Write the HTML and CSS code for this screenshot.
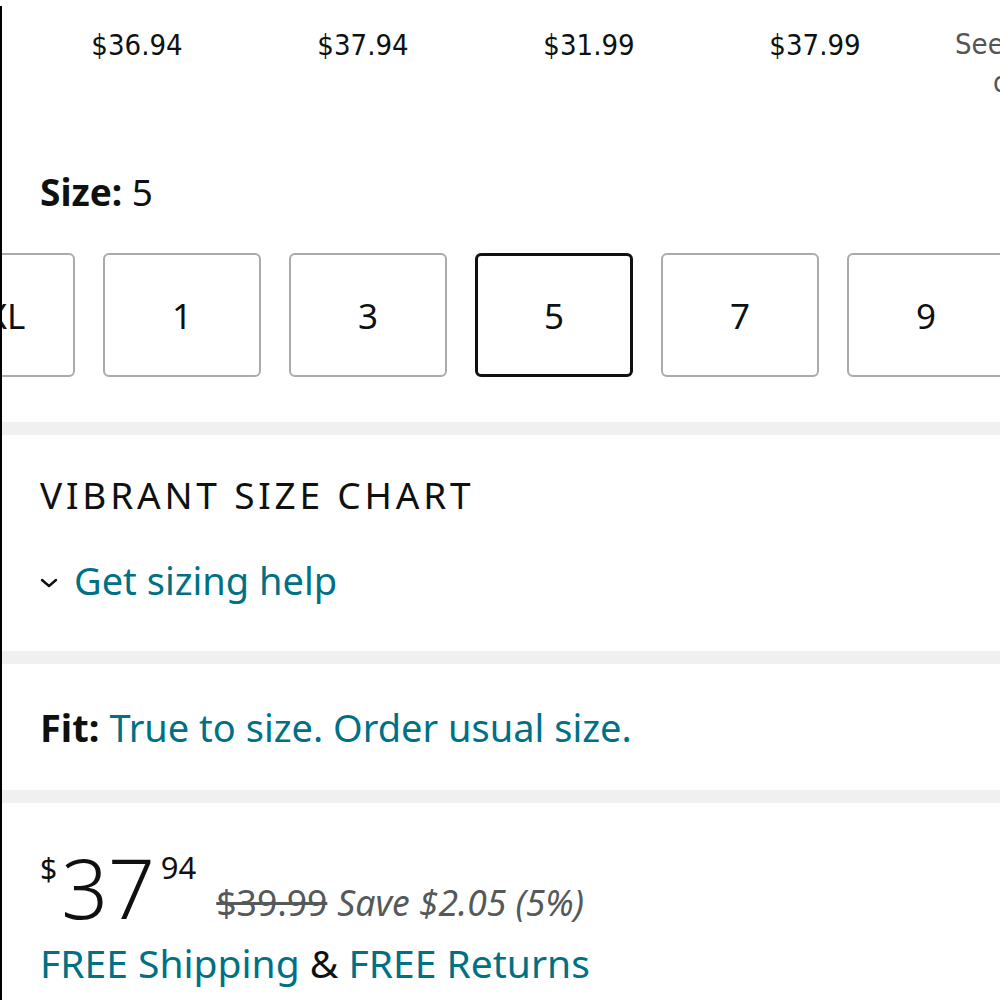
FILE: index.html
```html
<!DOCTYPE html>
<html lang="en">
<head>
    <meta charset="UTF-8">
    <meta name="viewport" content="width=device-width, initial-scale=1.0">
    <title>Product Size</title>
    <link rel="stylesheet" href="styles.css">
</head>
<body>
    <div id="page">
        <div class="swatch-prices">
            <div class="swatch-price">$36.94</div>
            <div class="swatch-price">$37.94</div>
            <div class="swatch-price">$31.99</div>
            <div class="swatch-price">$37.99</div>
            <div class="swatch-price more">See<br><span class="more-2">o</span></div>
        </div>

        <div class="size-section">
            <div class="size-label"><b>Size:</b> 5</div>
            <div class="size-row">
                <div class="size-btn first">XL</div>
                <div class="size-btn">1</div>
                <div class="size-btn">3</div>
                <div class="size-btn selected">5</div>
                <div class="size-btn">7</div>
                <div class="size-btn">9</div>
            </div>
        </div>

        <div class="divider"></div>

        <div class="chart-section">
            <div class="chart-title">VIBRANT SIZE CHART</div>
            <div class="sizing-help">
                <svg class="chevron" width="18" height="10" viewBox="0 0 18 10"><path d="M2 2 L9 8 L16 2" fill="none" stroke="#111" stroke-width="2.4" stroke-linecap="round" stroke-linejoin="round"/></svg>
                <a href="#">Get sizing help</a>
            </div>
        </div>

        <div class="divider"></div>

        <div class="fit-section">
            <b>Fit:</b> <a href="#">True to size. Order usual size.</a>
        </div>

        <div class="divider"></div>

        <div class="price-section">
            <div class="price-line">
                <span class="price-sym">$</span><span class="price-whole">37</span><span class="price-frac">94</span>
                <span class="list-price">$39.99</span>
                <span class="savings">Save $2.05 (5%)</span>
            </div>
            <div class="shipping">
                <a href="#">FREE Shipping</a> &amp; <a href="#">FREE Returns</a>
            </div>
        </div>
    </div>
</body>
</html>
```

FILE: styles.css
```css
body {
    margin: 0;
    padding: 0;
    background: white;
    color: #0f1111;
    font-family: "Noto Sans", "Open Sans", sans-serif;
    overflow: hidden;
}

a {
    color: #007185;
    text-decoration: none;
}

#page {
    margin-top: 6px;
    border-left: 2px solid #000;
    height: 994px;
    overflow: hidden;
}

.swatch-prices {
    display: flex;
    padding-top: 19px;
    height: 126px;
    box-sizing: border-box;
}

.swatch-price {
    flex: 0 0 226px;
    text-align: center;
    font-family: "DejaVu Sans", sans-serif;
    font-stretch: condensed;
    font-size: 29px;
    line-height: 40px;
}

.swatch-price:first-child {
    margin-left: 22px;
}

.swatch-price.more {
    color: #555;
    text-align: left;
    padding-left: 27px;
    line-height: 38px;
}

.more-2 {
    margin-left: 38px;
}

.size-section {
    padding: 37px 0 0 38px;
    height: 290px;
    box-sizing: border-box;
}

.size-label {
    font-size: 37px;
    line-height: 46px;
}

.size-row {
    display: flex;
    gap: 28px;
    margin-left: -123px;
    margin-top: 38px;
}

.size-btn {
    flex: 0 0 158px;
    height: 124px;
    box-sizing: border-box;
    border: 2px solid #aaa;
    border-radius: 6px;
    display: flex;
    align-items: center;
    justify-content: center;
    font-size: 35px;
}

.size-btn.first {
    padding-left: 20px;
}

.size-btn.selected {
    border: 3px solid #0f1111;
}

.divider {
    height: 13px;
    background: #f0f0f0;
}

.chart-section {
    padding: 36px 0 0 38px;
    height: 216px;
    box-sizing: border-box;
}

.chart-title {
    font-size: 37px;
    letter-spacing: 3.8px;
    line-height: 48px;
}

.sizing-help {
    display: flex;
    align-items: center;
    gap: 16px;
    margin-top: 35px;
    font-size: 38px;
    line-height: 52px;
}

.chevron {
    margin-top: 6px;
}

.fit-section {
    padding: 0 0 0 38px;
    height: 126px;
    display: flex;
    align-items: center;
    gap: 10px;
    font-size: 38px;
}

.price-section {
    padding: 42px 0 0 38px;
}

.price-line {
    display: flex;
    align-items: flex-start;
}

.price-sym {
    font-size: 30px;
    line-height: 40px;
    margin-top: 4px;
}

.price-whole {
    font-size: 82px;
    line-height: 84px;
    font-weight: 300;
    margin: 0 6px 0 4px;
}

.price-frac {
    font-size: 31px;
    line-height: 40px;
    margin-top: 2px;
}

.list-price {
    color: #565959;
    font-size: 35.5px;
    text-decoration: line-through;
    margin: 35px 10px 0 20px;
    line-height: 44px;
}

.savings {
    color: #565959;
    font-size: 35.5px;
    font-style: italic;
    margin-top: 35px;
    line-height: 44px;
}

.shipping {
    font-size: 39px;
    line-height: 54px;
    margin-top: 7px;
}
```
